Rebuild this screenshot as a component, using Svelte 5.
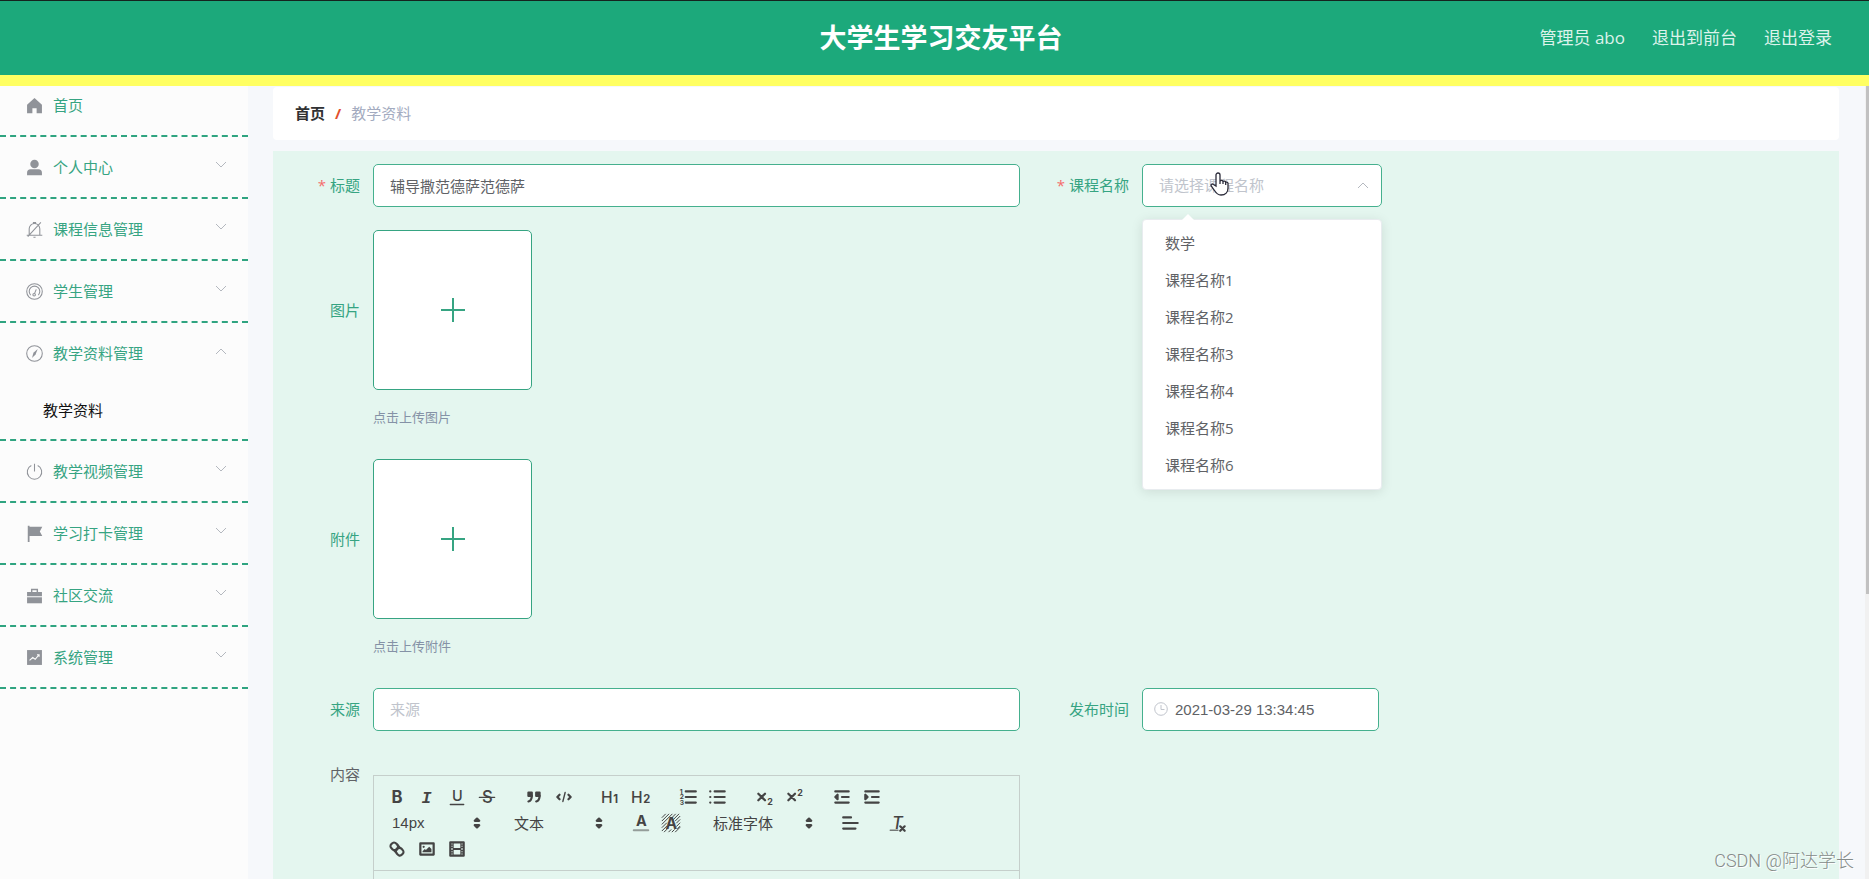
<script>
  // 24x24 menu icons, drawn in currentColor
  const menuIcons = {
    home: '<path fill="currentColor" stroke="none" d="M12 1.500 1.500 11v12h7.500v-7h6v7h7.500V11z"/>',
    user: '<g fill="currentColor" stroke="none"><circle cx="12" cy="7" r="6"/><path d="M1.500 23v-3.500a5 5 0 0 1 5-5h11a5 5 0 0 1 5 5V23z"/></g>',
    bell: '<path d="M4.500 19.500V11a7.500 7.500 0 0 1 15 0v8.500M1 20h22M10.500 23h3M10.500 3.500V2h3v1.500M2.500 22 21 2"/>',
    odometer: '<circle cx="12" cy="12" r="11"/><path d="M6.500 17a7.500 7.500 0 1 1 11 0"/><circle cx="11.500" cy="16.500" r="1.800"/><path d="m12 15 2.500-6"/>',
    compass: '<circle cx="12" cy="12" r="11"/><path fill="currentColor" stroke="none" d="M16.500 5.500 13.500 13.500l-5 5 2-7.500z"/>',
    power: '<path d="M12 1v11M7.500 3.500a10.200 10.200 0 1 0 9 0"/>',
    flag: '<path fill="currentColor" stroke="none" d="M2.500 1H5v1.500h18L19.500 9l3.500 6.500H5V24H2.500z"/>',
    briefcase: '<g fill="currentColor" stroke="none"><path d="M7 7V2.500h10V7h5.500v6h-21V7zm2 0h6V4.500H9z" fill-rule="evenodd"/><path d="M1.500 14.500h21V23h-21z"/></g>',
    chart: '<path fill="currentColor" stroke="none" d="M1.500 1.500h21v21h-21z"/><path stroke="#fcfcfc" d="m5 16 4.500-4 3.500 2.500 5.500-6.500M15.500 8h3v3"/>',
  }

  const menu = [
    { label: '个人中心', icon: 'user' },
    { label: '课程信息管理', icon: 'bell' },
    { label: '学生管理', icon: 'odometer' },
    { label: '教学资料管理', icon: 'compass', children: ['教学资料'] },
    { label: '教学视频管理', icon: 'power' },
    { label: '学习打卡管理', icon: 'flag' },
    { label: '社区交流', icon: 'briefcase' },
    { label: '系统管理', icon: 'chart' },
  ]

  const courses = ['数学', '课程名称1', '课程名称2', '课程名称3', '课程名称4', '课程名称5', '课程名称6']

  // 18x18 editor icons
  const cross = '<path d="m3 6 6 6M9 6l-6 6"/>'
  const tools = {
    bold: '<text x="4" y="14.500" font-size="15">B</text>',
    italic: '<text class="slab" x="4" y="14" font-size="15">I</text>',
    underline: '<text class="light" x="4.500" y="12.500" font-size="13">U</text><path stroke-width="1.300" d="M3 15.700h12"/>',
    strike: '<text class="light" x="4.500" y="14.500" font-size="15">S</text><path stroke-width="1" d="M2 9.300h14"/>',
    quote: '<path fill="currentColor" d="M4 5h3v3H4zM11 5h3v3h-3z"/><path d="M7 8c0 4-3 5-3 5M14 8c0 4-3 5-3 5"/>',
    code: '<path d="M5 7 3 9l2 2M13 7l2 2-2 2"/><path stroke-width="1.300" d="m10 5-2 8"/>',
    h1: '<text class="light" x="0" y="14.500" font-size="14">H</text><text x="11" y="14.500" font-size="10">1</text>',
    h2: '<text class="light" x="0" y="14.500" font-size="14">H</text><text x="11" y="14.500" font-size="10">2</text>',
    ordered: '<path d="M7 4h9M7 9h9M7 14h9"/><text x="1.500" y="6" font-size="6">1</text><text x="1.500" y="11" font-size="6">2</text><text x="1.500" y="16" font-size="6">3</text>',
    bullet: '<path d="M6 4h9M6 9h9M6 14h9M2 4h.1M2 9h.1M2 14h.1"/>',
    sub: cross + '<text x="11" y="16" font-size="8">2</text>',
    sup: cross + '<text x="11" y="8" font-size="8">2</text>',
    outdent: '<path d="M3 14h12M3 4h12M9 9h6"/><path fill="currentColor" d="M5 7v4L3 9z"/>',
    indent: '<path d="M3 14h12M3 4h12M9 9h6"/><path fill="currentColor" d="M3 7v4l2-2z"/>',
    color: '<text x="4.500" y="12" font-size="13">A</text><path opacity=".5" stroke-width="1.800" d="M2.500 15.500h13"/>',
    background: '<path stroke-width=".9" d="m1 4 3-3M1 7l6-6M1 10l9-9M1 13l4-4M1 16l4-4M9 5l4-4M11 6l5-5M13 7l4-4M14 9l3-3M14 12l3-3M15 14l2-2M3 17l3-3M7 17l2-2M10 17l2-2M13 17l4-4"/><text x="4" y="14.500" font-size="14">A</text>',
    align: '<path d="M2 9h13M2 14h11M2 4h7"/>',
    clean: '<text class="italic light" x="3.500" y="14" font-size="15">T</text><path d="m11 12 4 4M15 12l-4 4"/><path stroke-width="1.200" opacity=".7" d="M2 15.500h7"/>',
    link: '<path d="m7 11 4-4M8.900 4.577a3.476 3.476 0 0 1 .36 4.679A3.476 3.476 0 0 1 4.577 8.900C3.185 7.500 2.035 6.400 4.217 4.217S7.500 3.185 8.900 4.577zM13.423 9.100a3.476 3.476 0 0 0-4.679-.36 3.476 3.476 0 0 0 .36 4.679c1.392 1.392 2.500 2.542 4.679.36S14.815 10.500 13.423 9.100z"/>',
    image: '<path d="M3 4h12v10H3z"/><circle cx="6" cy="7" r="1" fill="currentColor" stroke="none"/><path fill="currentColor" stroke="none" d="M5 12v-1l2-2 1 1 3-3 2 2v3z"/>',
    video: '<path d="M3 3h12v12H3z"/><path fill="currentColor" stroke="none" d="M5 3h1v12H5zM12 3h1v12h-1zM5 8h8v2H5zM3 5h3v1H3zM3 7h3v1H3zM3 10h3v1H3zM3 12h3v1H3zM12 5h3v1h-3zM12 7h3v1h-3zM12 10h3v1h-3zM12 12h3v1h-3z"/>',
  }

  const toolbar = [
    { buttons: ['bold', 'italic', 'underline', 'strike'] },
    { buttons: ['quote', 'code'] },
    { buttons: ['h1', 'h2'] },
    { buttons: ['ordered', 'bullet'] },
    { buttons: ['sub', 'sup'] },
    { buttons: ['outdent', 'indent'] },
    { picker: '14px', name: '字号' },
    { picker: '文本', name: '标题' },
    { buttons: ['color', 'background'] },
    { picker: '标准字体', name: '字体', wide: true },
    { buttons: ['align'] },
    { buttons: ['clean'] },
    { buttons: ['link', 'image', 'video'] },
  ]

  let title = '辅导撒范德萨范德萨'
  let source = ''
  let publishedAt = '2021-03-29 13:34:45'
  let course = ''
  let courseOpen = true

  function pickCourse(name) {
    course = name
    courseOpen = false
  }
</script>

<div class="app">
  <header class="header">
    <h1>大学生学习交友平台</h1>
    <nav class="header-links">
      <span>管理员 abo</span>
      <a href="#front">退出到前台</a>
      <a href="#logout">退出登录</a>
    </nav>
  </header>

  <div class="shell">
    <aside class="sidebar">
      <div class="menu-group">
        <a class="menu-item" href="#home">
          <svg class="menu-icon" viewBox="0 0 24 24">{@html menuIcons.home}</svg>
          <span>首页</span>
        </a>
      </div>
      {#each menu as item}
        <div class="menu-group">
          <button class="menu-item" type="button">
            <svg class="menu-icon" viewBox="0 0 24 24">{@html menuIcons[item.icon]}</svg>
            <span>{item.label}</span>
            <svg class="chevron" class:up={item.children} viewBox="0 0 12 12"><path d="m1 3 5 5 5-5" /></svg>
          </button>
          {#if item.children}
            {#each item.children as child}
              <a class="submenu-item" href="#material">{child}</a>
            {/each}
          {/if}
        </div>
      {/each}
    </aside>

    <main class="content">
      <div class="breadcrumb">
        <a href="#home">首页</a>
        <span class="separator">/</span>
        <span>教学资料</span>
      </div>

      <form class="form">
        <div class="field">
          <label class="label required" for="title">标题</label>
          <input id="title" class="control" type="text" bind:value={title} />
        </div>

        <div class="field">
          <label class="label required" for="course">课程名称</label>
          <div class="select-wrap">
            <select id="course" class="control" class:empty={!course} bind:value={course}>
              <option value="">请选择课程名称</option>
              {#each courses as name}
                <option value={name}>{name}</option>
              {/each}
            </select>
            <svg class="chevron up" viewBox="0 0 12 12"><path d="m1 3 5 5 5-5" /></svg>
            {#if courseOpen}
              <div class="dropdown">
                {#each courses as name}
                  <button type="button" on:click={() => pickCourse(name)}>{name}</button>
                {/each}
              </div>
            {/if}
            <svg class="pointer" viewBox="0 0 19 24">
              <path d="M6 14V3a2 2 0 0 1 4 0v6a1.700 1.700 0 0 1 3 .5 1.700 1.700 0 0 1 2.700.8 1.500 1.500 0 0 1 2.300 1.400V16c0 4-2.500 7-7 7-3.500 0-5-2-6.500-4.500L1.200 14c-.8-1.500 1-2.700 2.300-1.500zM10 9v3M13 9.500V12M15.700 10.500V13" />
            </svg>
          </div>
        </div>

        <div class="field full">
          <label class="label tall" for="picture">图片</label>
          <div class="upload">
            <button id="picture" class="upload-box" type="button" aria-label="点击上传图片">
              <svg viewBox="0 0 24 24"><path d="M12 0v24M0 12h24" /></svg>
            </button>
            <p>点击上传图片</p>
          </div>
        </div>

        <div class="field full">
          <label class="label tall" for="attachment">附件</label>
          <div class="upload">
            <button id="attachment" class="upload-box" type="button" aria-label="点击上传附件">
              <svg viewBox="0 0 24 24"><path d="M12 0v24M0 12h24" /></svg>
            </button>
            <p>点击上传附件</p>
          </div>
        </div>

        <div class="field">
          <label class="label" for="source">来源</label>
          <input id="source" class="control" type="text" placeholder="来源" bind:value={source} />
        </div>

        <div class="field">
          <label class="label" for="published">发布时间</label>
          <div class="date-wrap">
            <svg class="clock" viewBox="0 0 14 14"><circle cx="7" cy="7" r="6.300" /><path d="M7 3v4.500h3.500" /></svg>
            <input id="published" class="control" type="text" bind:value={publishedAt} />
          </div>
        </div>

        <div class="field">
          <span class="label plain">内容</span>
          <div class="editor">
            <div class="toolbar">
              {#each toolbar as group}
                {#if group.picker}
                  <button class="picker" class:wide={group.wide} type="button" aria-label={group.name}>
                    <span>{group.picker}</span>
                    <svg viewBox="0 0 18 18"><path fill="currentColor" d="m7 11 2 2 2-2zM7 7l2-2 2 2z" /></svg>
                  </button>
                {:else}
                  <div class="tool-group">
                    {#each group.buttons as name}
                      <button class="tool" type="button" aria-label={name}>
                        <svg viewBox="0 0 18 18">{@html tools[name]}</svg>
                      </button>
                    {/each}
                  </div>
                {/if}
              {/each}
            </div>
            <div class="editor-body" contenteditable="true" role="textbox" tabindex="0" aria-label="内容"></div>
          </div>
        </div>
      </form>
    </main>
  </div>

  <div class="scrollbar"><div class="thumb"></div></div>
  <div class="watermark">CSDN @阿达学长</div>
</div>

<style>
  :global(body) {
    margin: 0;
    overflow: hidden;
  }

  .app {
    position: relative;
    display: flex;
    flex-direction: column;
    height: 100vh;
    overflow: hidden;
    background: #f6f8fb;
    color: #606266;
    font-family: 'Open Sans', 'Noto Sans CJK SC', sans-serif;
    font-size: 15px;
  }

  button,
  input,
  select {
    font: inherit;
    color: inherit;
  }

  button {
    border: 0;
    padding: 0;
    background: none;
    cursor: pointer;
  }

  a {
    color: inherit;
    text-decoration: none;
  }

  svg {
    flex-shrink: 0;
    fill: none;
    stroke: currentColor;
  }

  .header {
    position: relative;
    z-index: 2;
    flex-shrink: 0;
    display: grid;
    grid-template-columns: 1fr auto 1fr;
    align-items: center;
    box-sizing: border-box;
    height: 75px;
    padding: 0 37px 0 50px;
    border-top: 1px solid #15231e;
    background: #1ca97b;
    box-shadow: 0 11px 0 #ffff62;
    color: #fff;
  }

  .header h1 {
    grid-column: 2;
    margin: 0;
    font-size: 27px;
    line-height: 40px;
    font-weight: 700;
  }

  .header-links {
    display: flex;
    justify-content: flex-end;
    gap: 27px;
    padding-bottom: 3px;
    font-size: 17px;
    color: #dcf3eb;
  }

  .shell {
    flex: 1;
    display: flex;
    min-height: 0;
  }

  .sidebar {
    flex: 0 0 248px;
    background: #fcfcfc;
    color: #36a482;
  }

  .menu-group {
    border-bottom: 2px dashed #2fa480;
  }

  .menu-item {
    display: flex;
    align-items: center;
    gap: 10px;
    box-sizing: border-box;
    width: 100%;
    height: 60px;
    padding: 0 21px 0 26px;
    text-align: left;
  }

  .menu-item span {
    flex: 1;
    padding-bottom: 2px;
  }

  .menu-icon {
    width: 17px;
    height: 17px;
    color: #909399;
    stroke-width: 1.5;
  }

  .chevron {
    width: 12px;
    height: 12px;
    color: #b4b8bf;
  }

  .menu-item .chevron {
    margin-bottom: 4px;
  }

  .chevron.up {
    transform: rotate(180deg);
  }

  .submenu-item {
    display: block;
    height: 56px;
    padding-left: 43px;
    line-height: 54px;
    color: #111;
  }

  .content {
    flex: 1;
    min-width: 0;
    padding: 12px 30px 0 25px;
  }

  .breadcrumb {
    display: flex;
    align-items: center;
    gap: 10px;
    box-sizing: border-box;
    height: 53px;
    padding: 0 22px 2px;
    border-radius: 4px;
    background: #fff;
    color: #a3abc0;
  }

  .breadcrumb a {
    color: #303133;
    font-weight: 700;
  }

  .breadcrumb .separator {
    color: #e2502c;
    font-weight: 700;
  }

  .form {
    display: grid;
    grid-template-columns: 1fr 1fr;
    gap: 23px 22px;
    margin-top: 11px;
    padding: 13px 50px 24px 0;
    background: #e4f6ef;
  }

  .field {
    display: flex;
    align-items: flex-start;
    min-width: 0;
  }

  .field.full {
    grid-column: 1 / -1;
  }

  .label {
    flex: 0 0 100px;
    box-sizing: border-box;
    padding-right: 13px;
    text-align: right;
    line-height: 43px;
    color: #36a482;
  }

  .label.required::before {
    content: '*';
    margin-right: 4px;
    color: #f56c6c;
  }

  .label.tall {
    line-height: 160px;
  }

  .label.plain {
    line-height: 40px;
    color: #606266;
  }

  .control {
    box-sizing: border-box;
    width: 100%;
    height: 43px;
    padding: 0 16px;
    border: 1px solid #45b08e;
    border-radius: 5px;
    outline: 0;
    background: #fff;
    font-family: 'Liberation Sans', 'Noto Sans CJK SC', sans-serif;
  }

  .control::placeholder,
  .control.empty {
    color: #c0c4cc;
  }

  .select-wrap {
    position: relative;
    width: 240px;
  }

  .select-wrap select {
    appearance: none;
  }

  .select-wrap .chevron {
    position: absolute;
    top: 15px;
    right: 13px;
  }

  .pointer {
    position: absolute;
    top: 8px;
    left: 68px;
    width: 19px;
    height: 24px;
    fill: #fff;
    stroke: #2b2b3a;
    stroke-width: 1.3;
  }

  .dropdown {
    position: absolute;
    z-index: 1;
    top: 55px;
    left: 0;
    right: 0;
    padding: 5px 0;
    border: 1px solid #e8ecef;
    border-radius: 4px;
    background: #fff;
    box-shadow: 0 2px 12px rgba(0, 0, 0, 0.1);
  }

  .dropdown::before {
    content: '';
    position: absolute;
    top: -6px;
    left: 39px;
    border: 6px solid transparent;
    border-top-width: 0;
    border-bottom-color: #fff;
  }

  .dropdown button {
    display: block;
    width: 100%;
    padding: 0 22px;
    line-height: 37px;
    text-align: left;
  }

  .upload-box {
    display: flex;
    align-items: center;
    justify-content: center;
    box-sizing: border-box;
    width: 159px;
    height: 160px;
    border: 1px solid #36a482;
    border-radius: 5px;
    background: #fff;
    color: #36a482;
  }

  .upload-box svg {
    width: 24px;
    height: 24px;
    stroke-width: 2;
  }

  .upload p {
    margin: 0;
    padding: 16px 0 8px;
    font-size: 13px;
    line-height: 22px;
    color: #8592a6;
  }

  .date-wrap {
    position: relative;
    width: 237px;
  }

  .date-wrap .control {
    padding-left: 32px;
  }

  .clock {
    position: absolute;
    top: 14px;
    left: 12px;
    width: 14px;
    height: 14px;
    color: #c0c4cc;
  }

  .editor {
    flex: 1;
    min-width: 0;
    margin-top: 21px;
    border: 1px solid #c5cfcb;
    color: #444;
    font-family: 'Liberation Sans', 'Noto Sans CJK SC', sans-serif;
  }

  .toolbar {
    display: flex;
    flex-wrap: wrap;
    padding: 8px;
    border-bottom: 1px solid #c5cfcb;
  }

  .tool-group {
    display: flex;
    margin-right: 17px;
  }

  .tool {
    display: flex;
    align-items: center;
    justify-content: center;
    width: 30px;
    height: 26px;
  }

  .tool svg,
  .picker svg {
    width: 20px;
    height: 20px;
    overflow: visible;
    stroke-width: 2;
    stroke-linecap: round;
    stroke-linejoin: round;
  }

  .tool :global(text) {
    fill: currentColor;
    stroke: none;
    font-family: Inter, sans-serif;
    font-weight: 700;
  }

  .tool :global(.light) {
    font-weight: 500;
  }

  .tool :global(.italic) {
    font-style: italic;
  }

  .tool :global(.slab) {
    font-family: 'Liberation Mono', monospace;
    font-style: italic;
  }

  .picker {
    display: flex;
    align-items: center;
    justify-content: space-between;
    width: 105px;
    height: 26px;
    margin-right: 17px;
    padding-left: 10px;
  }

  .picker span {
    padding-bottom: 2px;
  }

  .picker.wide {
    width: 116px;
  }

  .editor-body {
    min-height: 320px;
  }

  .scrollbar {
    position: absolute;
    top: 86px;
    right: 0;
    bottom: 0;
    width: 4px;
    background: #f1f1f1;
  }

  .thumb {
    height: 64%;
    margin-left: 1px;
    background: #c1c1c1;
  }

  .watermark {
    position: absolute;
    right: 15px;
    bottom: 5px;
    font-family: Roboto, 'Noto Sans CJK SC', sans-serif;
    font-size: 18px;
    font-weight: 300;
    line-height: 26px;
    color: #858b89;
    text-shadow: 1px 1px 0 #fff;
  }
</style>
